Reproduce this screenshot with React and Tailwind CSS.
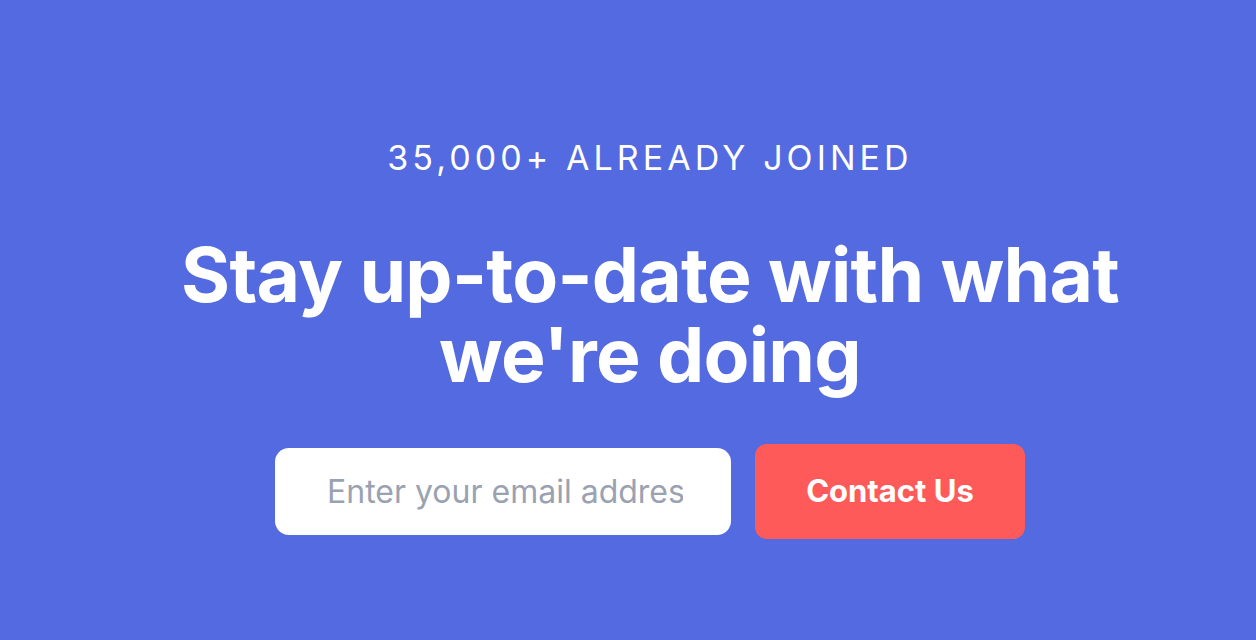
export default function App() {
  return (
    <div className="min-h-screen w-full bg-[#536ae0] flex flex-col items-center pl-[44px] pt-[138px] font-['Inter',sans-serif] text-white">
      {/* eyebrow */}
      <p className="text-[34px] leading-[40px] tracking-[0.12em] font-normal">35,000+ ALREADY JOINED</p>

      {/* heading */}
      <h1 className="mt-[57px] text-[75px] leading-[80px] font-bold text-center tracking-[-0.01em]">
        Stay up-to-date with what
        <br />
        we're doing
      </h1>

      {/* signup */}
      <form className="mt-[49px] flex items-center gap-6" onSubmit={(e) => e.preventDefault()}>
        <input
          type="email"
          placeholder="Enter your email address"
          className="w-[456px] h-[87px] rounded-[14px] bg-white pl-[52px] pr-[48px] text-[32px] text-gray-700 placeholder:text-[#9aa2b1] outline-none"
        />
        <button
          type="submit"
          className="w-[270px] h-[95px] rounded-[12px] bg-[#ff5a5a] text-[31px] font-bold text-white"
        >
          Contact Us
        </button>
      </form>
    </div>
  )
}
